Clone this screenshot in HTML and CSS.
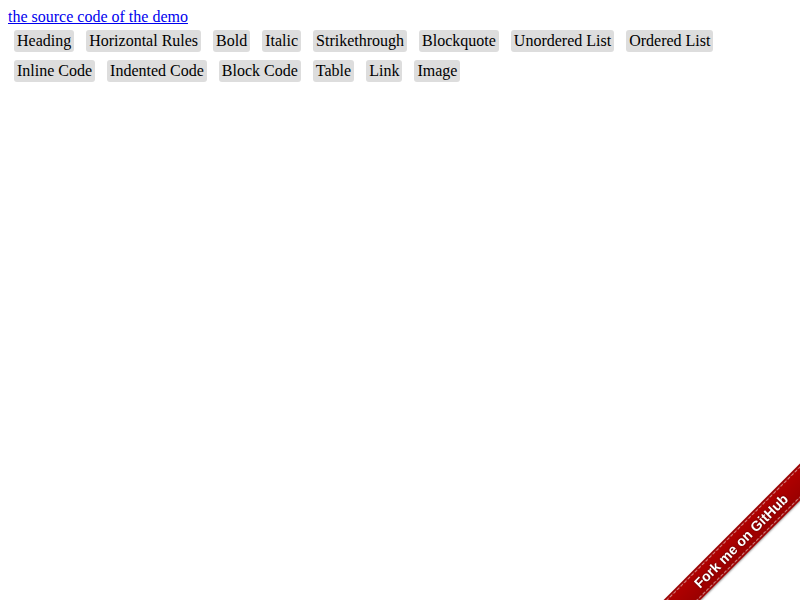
FILE: index.html
```html
<!DOCTYPE html>
<html>
<head>
<meta charset="utf-8">
<link rel="stylesheet" href="styles.css">
</head>
<body>
<div class="top"><a href="#">the source code of the demo</a></div>
<div class="buttons">
  <span class="btn">Heading</span>
  <span class="btn">Horizontal Rules</span>
  <span class="btn">Bold</span>
  <span class="btn">Italic</span>
  <span class="btn">Strikethrough</span>
  <span class="btn">Blockquote</span>
  <span class="btn">Unordered List</span>
  <span class="btn">Ordered List</span>
  <span class="btn">Inline Code</span>
  <span class="btn">Indented Code</span>
  <span class="btn">Block Code</span>
  <span class="btn">Table</span>
  <span class="btn">Link</span>
  <span class="btn">Image</span>
</div>
<div class="ribbon-wrap"><a class="ribbon" href="#">Fork me on GitHub</a></div>
</body>
</html>
```
FILE: styles.css
```css
html, body {
  background: #fff;
}
body {
  margin: 8px;
  font-family: "Liberation Serif", "Times New Roman", serif;
  font-size: 16px;
  color: #000;
}
.top {
  line-height: 18px;
}
.top a {
  color: #0000ee;
  text-decoration: underline;
}
.buttons {
  display: flex;
  flex-wrap: wrap;
  gap: 8px 12px;
  padding: 4px 6px 3px;
  width: 720px;
}
.btn {
  display: block;
  background: #dddddd;
  border-radius: 3px;
  padding: 2px 3px;
  line-height: 18px;
  white-space: nowrap;
}
.ribbon-wrap {
  position: fixed;
  right: 0;
  bottom: 0;
  width: 149px;
  height: 149px;
  overflow: hidden;
}
.ribbon {
  position: absolute;
  left: -20px;
  top: 77px;
  width: 220px;
  height: 26px;
  box-sizing: border-box;
  transform: rotate(-45deg);
  background: linear-gradient(#b00000, #9a0000);
  color: #fff;
  font-family: "Liberation Sans", Arial, sans-serif;
  font-weight: bold;
  font-size: 14px;
  line-height: 22px;
  text-align: center;
  text-decoration: none;
  border-top: 2px solid #9a0000;
  border-bottom: 2px solid #9a0000;
  box-shadow: 0 1px 2px rgba(0,0,0,0.4);
  text-shadow: 0 0 2px rgba(0,0,0,0.6);
}
.ribbon::before, .ribbon::after {
  content: "";
  position: absolute;
  left: 0;
  right: 0;
  height: 0;
  border-top: 1px dashed rgba(255,255,255,0.45);
}
.ribbon::before { top: 0; }
.ribbon::after { bottom: 0; }
```
